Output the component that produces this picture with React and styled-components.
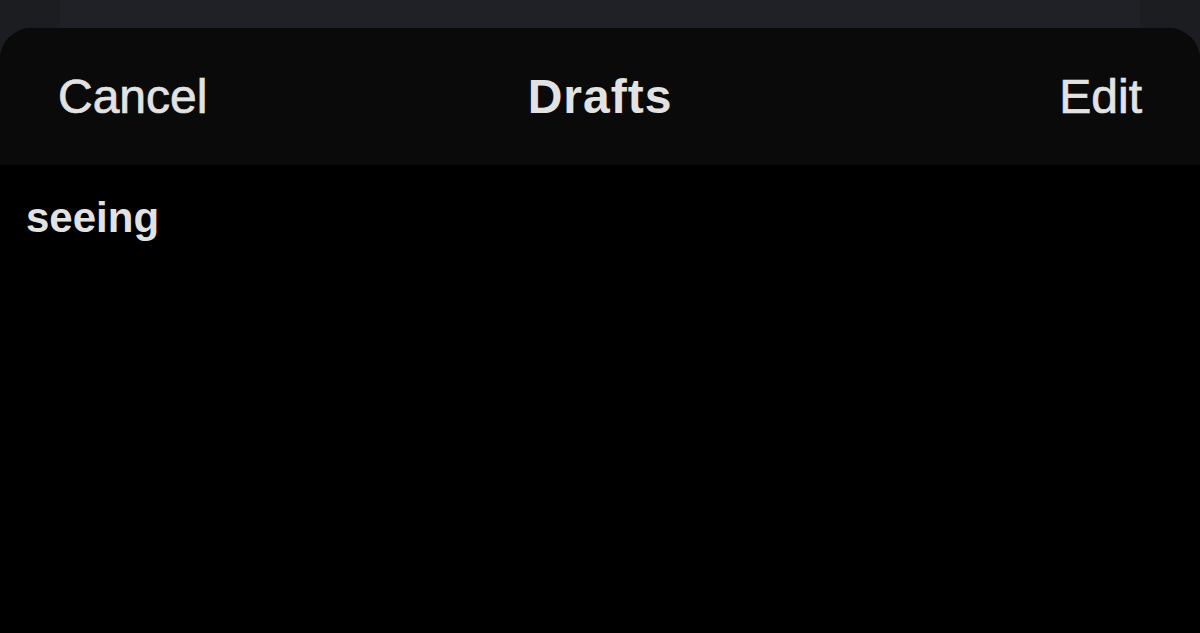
import React from "react";
import styled, { createGlobalStyle } from "styled-components";

const GlobalStyle = createGlobalStyle`
  html, body {
    margin: 0;
    padding: 0;
    background: #1c1d21;
  }
  body {
    font-family: "Liberation Sans", Arial, sans-serif;
    -webkit-font-smoothing: antialiased;
  }
`;

const Screen = styled.div`
  width: 1200px;
  height: 633px;
  display: flex;
  flex-direction: column;
  background: #1c1d21;
  overflow: hidden;
`;

const Backdrop = styled.div`
  height: 28px;
  flex: none;
  display: flex;
  padding: 0 60px;
`;

const BehindCard = styled.div`
  flex: 1;
  background: #202126;
`;

const Sheet = styled.section`
  flex: 1;
  display: flex;
  flex-direction: column;
  background: #000;
  border-radius: 32px 32px 0 0;
  overflow: hidden;
`;

const NavBar = styled.header`
  height: 137px;
  flex: none;
  display: grid;
  grid-template-columns: 1fr auto 1fr;
  align-items: center;
  padding: 0 58px;
  background: #0a0a0b;
`;

const NavButton = styled.button`
  border: 0;
  background: none;
  padding: 0;
  font-family: inherit;
  font-size: 48px;
  line-height: 1;
  font-weight: 400;
  -webkit-text-stroke: 0.7px #e2e2e2;
  color: #e2e2e2;
  justify-self: ${(p) => p.$align};
  cursor: pointer;
`;

const Title = styled.h1`
  margin: 0;
  font-size: 48px;
  line-height: 1;
  font-weight: 700;
  letter-spacing: 1px;
  color: #e2e2e2;
`;

const DraftList = styled.div`
  flex: 1;
  display: flex;
  flex-direction: column;
  padding: 32px 26px 0;
`;

const DraftItem = styled.div`
  font-size: 42px;
  line-height: 1;
  font-weight: 700;
  color: #e2e2e2;
`;

export default function App() {
  const drafts = ["seeing"];
  return (
    <>
      <GlobalStyle />
      <Screen>
        <Backdrop>
          <BehindCard />
        </Backdrop>
        <Sheet>
          <NavBar>
            <NavButton $align="start">Cancel</NavButton>
            <Title>Drafts</Title>
            <NavButton $align="end">Edit</NavButton>
          </NavBar>
          <DraftList>
            {drafts.map((d) => (
              <DraftItem key={d}>{d}</DraftItem>
            ))}
          </DraftList>
        </Sheet>
      </Screen>
    </>
  );
}
